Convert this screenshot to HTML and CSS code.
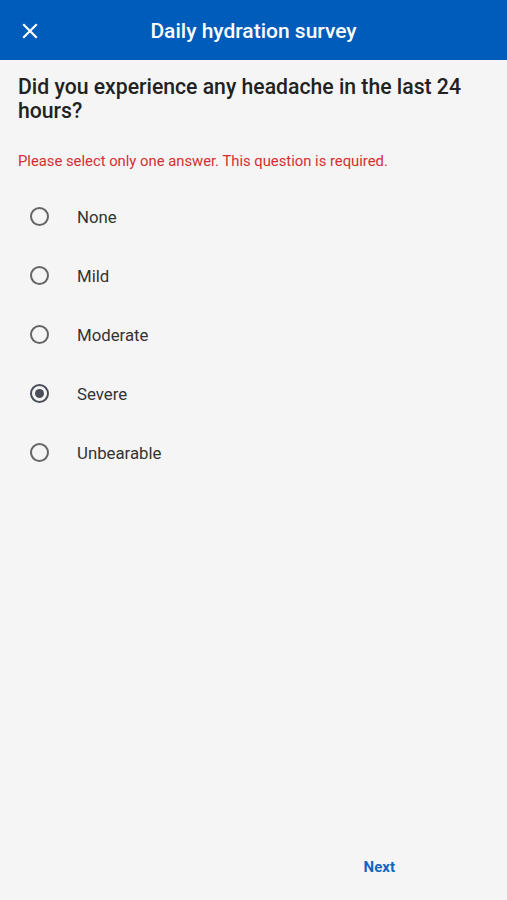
FILE: index.html
```html
<!DOCTYPE html>
<html lang="en">
<head>
    <meta charset="UTF-8">
    <meta name="viewport" content="width=device-width, initial-scale=1.0">
    <title>Daily hydration survey</title>
    <link rel="stylesheet" href="styles.css">
</head>
<body>
    <div class="app">
        <header class="topbar">
            <button class="close" aria-label="Close">
                <svg width="16" height="16" viewBox="0 0 16 16">
                    <path d="M2 2 L14 14 M14 2 L2 14" stroke="#fff" stroke-width="2.2" stroke-linecap="square" fill="none"/>
                </svg>
            </button>
            <h1>Daily hydration survey</h1>
        </header>

        <main class="content">
            <h2 class="question">Did you experience any headache in the last 24 hours?</h2>
            <p class="error">Please select only one answer. This question is required.</p>

            <div class="options">
                <label class="option"><span class="radio"></span>None</label>
                <label class="option"><span class="radio"></span>Mild</label>
                <label class="option"><span class="radio"></span>Moderate</label>
                <label class="option"><span class="radio checked"></span>Severe</label>
                <label class="option"><span class="radio"></span>Unbearable</label>
            </div>
        </main>

        <footer class="footer">
            <button class="next">Next</button>
        </footer>
    </div>
</body>
</html>
```

FILE: styles.css
```css
body {
    margin: 0;
    font-family: Roboto, "Liberation Sans", sans-serif;
    background-color: #f5f5f5;
}
.app {
    display: flex;
    flex-direction: column;
    height: 900px;
}
.topbar {
    height: 60px;
    background-color: #005cbb;
    display: flex;
    align-items: center;
    justify-content: center;
    position: relative;
}
.topbar h1 {
    margin: 2px 0 0;
    color: #fff;
    font-size: 21px;
    font-weight: 500;
}
.close {
    position: absolute;
    left: 14px;
    top: 15px;
    width: 32px;
    height: 32px;
    padding: 0;
    border: none;
    background: none;
    display: flex;
    align-items: center;
    justify-content: center;
}
.content {
    flex: 1;
    padding: 15px 18px 0;
}
.question {
    margin: 0;
    font-size: 21.2px;
    line-height: 24px;
    font-weight: 500;
    color: #222;
}
.error {
    margin: 28px 0 0;
    font-size: 14.8px;
    line-height: 20px;
    color: #d32f2f;
}
.options {
    margin-top: 16px;
}
.option {
    height: 59px;
    display: flex;
    align-items: center;
    padding-left: 12px;
    font-size: 16.8px;
    color: #333;
}
.radio {
    width: 15px;
    height: 15px;
    border: 2px solid #666;
    border-radius: 50%;
    margin-right: 28px;
    display: flex;
    align-items: center;
    justify-content: center;
}
.radio.checked {
    border-color: #4a4e5a;
}
.radio.checked::after {
    content: "";
    width: 9px;
    height: 9px;
    border-radius: 50%;
    background-color: #4a4e5a;
}
.footer {
    height: 46px;
    display: flex;
    justify-content: flex-end;
    align-items: flex-start;
    padding-right: 100px;
}
.next {
    border: none;
    background: none;
    padding: 4px 12px;
    font-family: Roboto, "Liberation Sans", sans-serif;
    font-size: 15px;
    font-weight: 700;
    color: #1565c0;
}
```
